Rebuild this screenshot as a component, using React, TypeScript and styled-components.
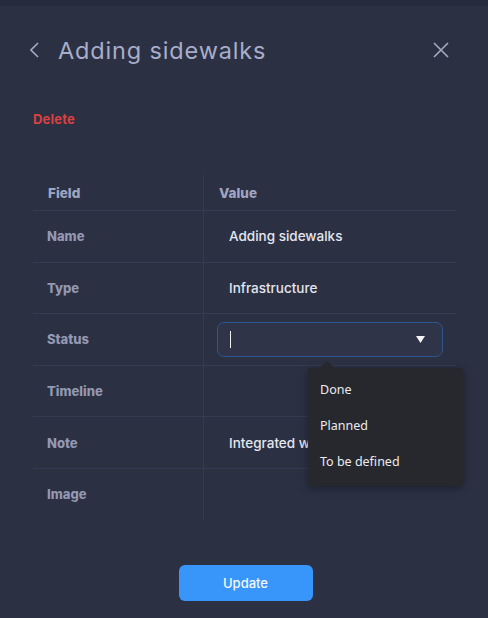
import React from "react";
import styled, { createGlobalStyle } from "styled-components";

const Global = createGlobalStyle`
  html, body {
    margin: 0;
    padding: 0;
    background: #2b3043;
  }
  body {
    font-family: Inter, "Noto Sans", sans-serif;
    -webkit-font-smoothing: antialiased;
  }
`;

const Page = styled.div`
  width: 488px;
  height: 618px;
  box-sizing: border-box;
  background: #2b3043;
  border-top: 6px solid #262b3b;
  display: flex;
  flex-direction: column;
  padding: 0 32px 0 33px;
  overflow: hidden;
`;

const Header = styled.div`
  display: flex;
  align-items: center;
  height: 30px;
  margin-top: 29px;
`;

const IconButton = styled.button<{ $shift?: number }>`
  background: none;
  border: 0;
  padding: 0;
  margin-left: ${(p) => p.$shift ?? 0}px;
  display: flex;
  align-items: center;
  justify-content: center;
  color: #a4a9c4;
  cursor: pointer;
`;

const Title = styled.h1`
  flex: 1;
  margin: 0 0 0 19px;
  font-size: 23.5px;
  font-weight: 400;
  letter-spacing: 0.85px;
  color: #a8adc9;
`;

const DeleteLink = styled.a`
  margin-top: 46px;
  font-size: 13px;
  font-weight: 700;
  letter-spacing: 0.2px;
  color: #dc4040;
  line-height: 16px;
  cursor: pointer;
`;

const Table = styled.div`
  margin-top: 48px;
  display: grid;
  grid-template-columns: 170px 1fr;
  width: 423px;
`;

const Cell = styled.div<{ $value?: boolean; $head?: boolean; $last?: boolean }>`
  height: ${(p) => (p.$head ? 35 : 50.6)}px;
  border-bottom: ${(p) => (p.$last ? "none" : "1px solid #363b51")};
  border-left: ${(p) => (p.$value ? "1px solid #363b51" : "none")};
  display: flex;
  align-items: center;
  position: relative;
  box-sizing: content-box;
  padding-left: ${(p) => (p.$value ? (p.$head ? 14 : 25) : 14)}px;
  padding-right: ${(p) => (p.$value ? 13 : 0)}px;
`;

const HeadText = styled.span`
  font-size: 13.5px;
  font-weight: 800;
  color: #a0a5c1;
  margin-left: 1px;
`;

const Label = styled.span`
  font-size: 13px;
  font-weight: 800;
  color: #9398b3;
`;

const Value = styled.span`
  font-size: 13.5px;
  font-weight: 500;
  color: #e4e6ee;
  white-space: nowrap;
`;

const SelectWrap = styled.div`
  position: relative;
  margin-left: -12px;
  width: 226px;
`;

const SelectBox = styled.div`
  height: 35px;
  box-sizing: border-box;
  border: 1px solid #2d5590;
  border-radius: 7px;
  background: #2f3449;
  display: flex;
  align-items: center;
  justify-content: space-between;
  padding: 0 17px 0 12px;
`;

const Caret = styled.span`
  width: 1px;
  height: 17px;
  background: #f2f2f2;
`;

const Menu = styled.div`
  position: absolute;
  top: 46px;
  left: 91px;
  width: 155px;
  box-sizing: border-box;
  padding: 4px 0 6px;
  background: #27282e;
  border-radius: 4px;
  box-shadow: 0 2px 8px rgba(0, 0, 0, 0.35);
  z-index: 5;

  &::before {
    content: "";
    position: absolute;
    top: -7px;
    left: 11px;
    border-left: 8px solid transparent;
    border-right: 8px solid transparent;
    border-bottom: 7px solid #27282e;
  }
`;

const MenuItem = styled.div`
  height: 36px;
  display: flex;
  align-items: center;
  padding-left: 12px;
  font-family: "Noto Sans", "Open Sans", sans-serif;
  font-size: 12.5px;
  color: #ebebef;
`;

const Footer = styled.div`
  display: flex;
  justify-content: center;
  margin-top: 45px;
  padding-left: 2px;
`;

const UpdateButton = styled.button`
  width: 134px;
  height: 36px;
  border: 0;
  border-radius: 6px;
  background: #3896fb;
  color: #f4f8ff;
  font-family: Inter, "Noto Sans", sans-serif;
  font-size: 13px;
  font-weight: 500;
  cursor: pointer;
`;

const rows: { field: string; value?: string; select?: boolean }[] = [
  { field: "Name", value: "Adding sidewalks" },
  { field: "Type", value: "Infrastructure" },
  { field: "Status", select: true },
  { field: "Timeline" },
  { field: "Note", value: "Integrated w" },
  { field: "Image" },
];

const statusOptions = ["Done", "Planned", "To be defined"];

export default function App() {
  return (
    <>
      <Global />
      <Page>
        <Header>
          <IconButton aria-label="Back" $shift={-3}>
            <svg width="9" height="16" viewBox="0 0 9 16" fill="none">
              <path d="M8 1L1 8l7 7" stroke="currentColor" strokeWidth="1.6" />
            </svg>
          </IconButton>
          <Title>Adding sidewalks</Title>
          <IconButton aria-label="Close" style={{ marginRight: 7 }}>
            <svg width="16" height="16" viewBox="0 0 16 16" fill="none">
              <path d="M1 1l14 14M15 1L1 15" stroke="currentColor" strokeWidth="1.6" />
            </svg>
          </IconButton>
        </Header>

        <DeleteLink>Delete</DeleteLink>

        <Table>
          <Cell $head>
            <HeadText>Field</HeadText>
          </Cell>
          <Cell $head $value>
            <HeadText>Value</HeadText>
          </Cell>
          {rows.map((r, i) => {
            const last = i === rows.length - 1;
            return (
              <React.Fragment key={r.field}>
                <Cell $last={last}>
                  <Label>{r.field}</Label>
                </Cell>
                <Cell $value $last={last}>
                  {r.select ? (
                    <SelectWrap>
                      <SelectBox>
                        <Caret />
                        <svg width="9" height="7" viewBox="0 0 9 7">
                          <path d="M0 0h9L4.5 7z" fill="#f4f4f6" />
                        </svg>
                      </SelectBox>
                      <Menu>
                        {statusOptions.map((o) => (
                          <MenuItem key={o}>{o}</MenuItem>
                        ))}
                      </Menu>
                    </SelectWrap>
                  ) : (
                    r.value && <Value>{r.value}</Value>
                  )}
                </Cell>
              </React.Fragment>
            );
          })}
        </Table>

        <Footer>
          <UpdateButton>Update</UpdateButton>
        </Footer>
      </Page>
    </>
  );
}
